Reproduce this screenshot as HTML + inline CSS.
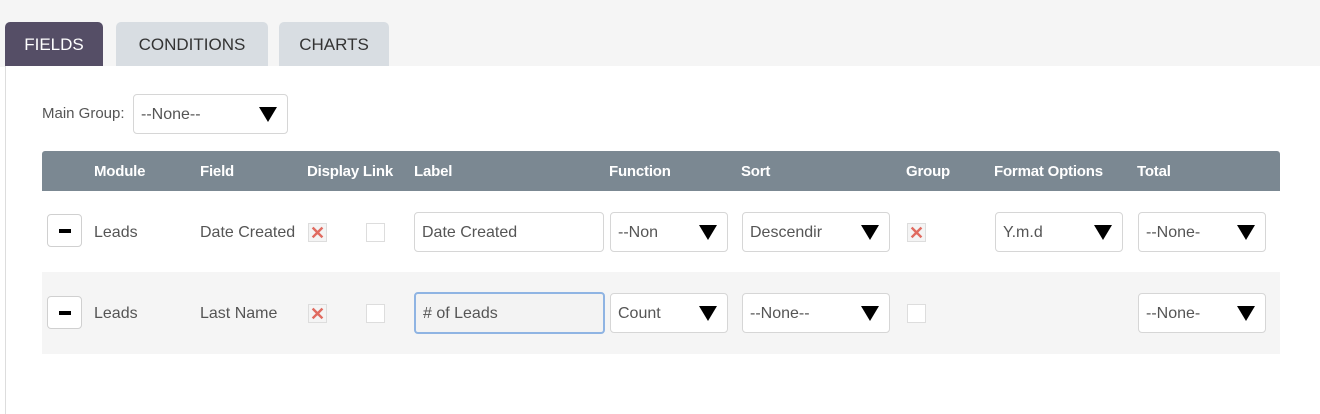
<!DOCTYPE html>
<html><head><style>
body{margin:0;width:1320px;height:414px;background:#fff;font-family:"Liberation Sans",sans-serif;position:relative;overflow:hidden;color:#444}
.a{position:absolute}
.top{left:0;top:0;width:1320px;height:67px;background:#f5f5f5}
.panel{left:5px;top:66px;width:1315px;height:348px;background:#fff;border-left:1px solid #ddd}
.tab{top:22px;height:44px;border-radius:5px 5px 0 0;font-size:17px;line-height:46px;text-align:center;color:#333;background:#d8dde2}
.hd{left:42px;top:151px;width:1238px;height:40px;background:#7b8892;border-radius:3px 3px 0 0}
.h{top:152px;line-height:40px;color:#fff;font-weight:bold;font-size:15px;letter-spacing:-0.2px}
.r2{left:42px;top:272px;width:1238px;height:82px;background:#f5f5f5}
.t{font-size:16px;color:#555}
.box{background:#fff;border:1px solid #d6d6d6;border-radius:4px;box-sizing:border-box;font-size:16px;color:#555;padding-left:7px;overflow:hidden;white-space:nowrap}
.sel::after{content:"";position:absolute;right:10px;top:12px;border-left:9px solid transparent;border-right:9px solid transparent;border-top:15px solid #000}
.cb{width:19px;height:19px;border:1px solid #ddd;background:#fff;box-sizing:border-box}
.x{background:#f4f4f4;color:#e06b60;font-size:18px;line-height:18px;text-align:center;font-weight:bold}
.mn{width:35px;height:33px;background:#fff;border:1px solid #d0d0d0;border-radius:4px;box-sizing:border-box}
.mn::after{content:"";position:absolute;left:11px;top:14px;width:12px;height:4px;background:#000}
</style></head><body>
<div class="a top"></div>
<div class="a panel"></div>
<div class="a tab" style="left:5px;width:98px;background:#554e66;color:#fff">FIELDS</div>
<div class="a tab" style="left:116px;width:152px">CONDITIONS</div>
<div class="a tab" style="left:279px;width:110px">CHARTS</div>
<div class="a t" style="left:42px;top:105px;font-size:15px">Main Group:</div>
<div class="a box sel" style="left:133px;top:94px;width:155px;height:40px;line-height:40px">--None--</div>
<div class="a hd"></div>
<div class="a h" style="left:94px">Module</div>
<div class="a h" style="left:200px">Field</div>
<div class="a h" style="left:307px">Display Link</div>
<div class="a h" style="left:414px">Label</div>
<div class="a h" style="left:609px">Function</div>
<div class="a h" style="left:741px">Sort</div>
<div class="a h" style="left:906px">Group</div>
<div class="a h" style="left:994px">Format Options</div>
<div class="a h" style="left:1137px">Total</div>
<div class="a r2"></div>

<div class="a mn" style="left:47px;top:214px"></div>
<div class="a t" style="left:94px;top:224px">Leads</div>
<div class="a t" style="left:200px;top:224px">Date Created</div>
<div class="a cb x" style="left:308px;top:223px">✕</div>
<div class="a cb" style="left:366px;top:223px"></div>
<div class="a box" style="left:414px;top:212px;width:190px;height:40px;line-height:40px">Date Created</div>
<div class="a box sel" style="left:610px;top:212px;width:118px;height:40px;line-height:40px">--Non</div>
<div class="a box sel" style="left:742px;top:212px;width:148px;height:40px;line-height:40px">Descendir</div>
<div class="a cb x" style="left:907px;top:223px">✕</div>
<div class="a box sel" style="left:995px;top:212px;width:128px;height:40px;line-height:40px">Y.m.d</div>
<div class="a box sel" style="left:1138px;top:212px;width:128px;height:40px;line-height:40px">--None-</div>

<div class="a mn" style="left:47px;top:296px"></div>
<div class="a t" style="left:94px;top:305px">Leads</div>
<div class="a t" style="left:200px;top:305px">Last Name</div>
<div class="a cb x" style="left:308px;top:304px">✕</div>
<div class="a cb" style="left:366px;top:304px"></div>
<div class="a box" style="left:414px;top:292px;width:191px;height:42px;line-height:40px;border:2px solid #8fb4e3;background:#f3f3f3">#&nbsp;of Leads</div>
<div class="a box sel" style="left:610px;top:293px;width:118px;height:40px;line-height:40px">Count</div>
<div class="a box sel" style="left:742px;top:293px;width:148px;height:40px;line-height:40px">--None--</div>
<div class="a cb" style="left:907px;top:304px"></div>
<div class="a box sel" style="left:1138px;top:293px;width:128px;height:40px;line-height:40px">--None-</div>
</body></html>
